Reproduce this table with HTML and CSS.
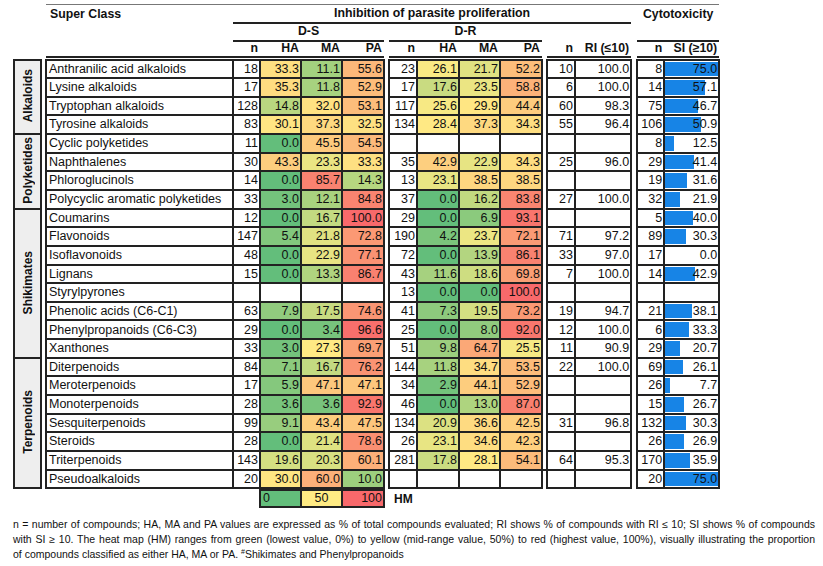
FILE: index.html
```html
<!DOCTYPE html>
<html lang="en">
<head>
<meta charset="utf-8">
<title>Super Class table</title>
<link rel="stylesheet" href="styles.css">
</head>
<body>
<div class="page">
  <table class="grid">
    <colgroup>
      <col class="c-label"><col class="c-gap"><col class="c-name">
      <col class="c-n"><col class="c-p"><col class="c-p"><col class="c-p2">
      <col class="c-gap"><col class="c-n2"><col class="c-p2"><col class="c-p"><col class="c-p2">
      <col class="c-gap"><col class="c-n2"><col class="c-ri">
      <col class="c-gap6"><col class="c-n"><col class="c-si">
    </colgroup>
    <thead>
      <tr class="h1">
        <td></td><td></td>
        <th class="top sc">Super Class</th>
        <th colspan="12" class="top under">Inhibition of parasite proliferation</th>
        <th class="top"></th>
        <th colspan="2" class="top">Cytotoxicity</th>
      </tr>
      <tr class="h2">
        <td></td><td></td><th></th>
        <th colspan="4" class="under">D-S</th>
        <th></th>
        <th colspan="4" class="under">D-R</th>
        <th></th>
        <th colspan="2"></th>
        <th></th>
        <th colspan="2" class="under"></th>
      </tr>
      <tr class="h3">
        <td></td><td></td>
        <th class="under"></th>
        <th class="under r">n</th><th class="under r">HA</th><th class="under r">MA</th><th class="under r">PA</th>
        <th></th>
        <th class="under r">n</th><th class="under r">HA</th><th class="under r">MA</th><th class="under r">PA</th>
        <th></th>
        <th class="under r">n</th><th class="under r">RI (≤10)</th>
        <th></th>
        <th class="under r">n</th><th class="under r">SI (≥10)</th>
      </tr>
      <tr class="sp3"><td colspan="18"></td></tr>
    </thead>
    <tbody id="rows"></tbody>
    <tfoot>
      <tr class="sp2"><td colspan="18"></td></tr>
      <tr class="legend">
        <td></td><td></td><td></td><td></td>
        <td class="lg lg-0">0</td>
        <td class="lg lg-50">50</td>
        <td class="lg lg-100">100</td>
        <td></td>
        <td colspan="10" class="hm">HM</td>
      </tr>
    </tfoot>
  </table>
  <p class="note">
    <span class="ln j">n = number of compounds; HA, MA and PA values are expressed as % of total compounds evaluated; RI shows % of compounds with RI ≤ 10; SI shows % of compounds</span>
    <span class="ln j">with SI ≥ 10. The heat map (HM) ranges from green (lowest value, 0%) to yellow (mid-range value, 50%) to red (highest value, 100%), visually illustrating the proportion</span>
    <span class="ln">of compounds classified as either HA, MA or PA. <sup>#</sup>Shikimates and Phenylpropanoids</span>
  </p>
</div>
<script src="script.js"></script>
</body>
</html>
```

FILE: styles.css
```css
* { box-sizing: border-box; }
html, body { margin: 0; padding: 0; background: #fff; }
body {
  font-family: "Liberation Sans", Arial, sans-serif;
  color: #111;
}
.page { padding: 4px 0 0 13px; }

.grid {
  border-collapse: collapse;
  table-layout: fixed;
  width: 705px;
  font-size: 12.5px;
  line-height: 1;
}
.c-label { width: 27px; }
.c-gap { width: 5px; }
.c-gap6 { width: 6px; }
.c-name { width: 187px; }
.c-n { width: 27px; }
.c-n2 { width: 28px; }
.c-p { width: 41px; }
.c-p2 { width: 42px; }
.c-ri { width: 56px; }
.c-si { width: 55px; }

.grid td, .grid th { padding: 0; white-space: nowrap; overflow: hidden; }

/* header */
.grid th { font-weight: bold; font-size: 12.3px; text-align: center; }
.grid th.r { text-align: right; padding-right: 2px; }
.grid th.sc { text-align: left; padding-left: 4px; }
.h1 { height: 18px; }
.h2 { height: 18px; }
.h3 { height: 16px; }
.top { border-top: 1px solid #777; }
.under { border-bottom: 2px solid #222; }
.sp3 { height: 3px; }
.sp3 td, .sp2 td { padding: 0; border: none; }
.sp2 { height: 2px; }

/* data */
.row { height: 18.65px; }
.row td { border: 2px solid #222; }
.row td.gap { border: none; }
.row td.gap.join { border-top: 2px solid #222; }
.row td.label {
  background: #eeeeee;
  text-align: center;
  vertical-align: middle;
  font-weight: bold;
  font-size: 12px;
}
.vt {
  display: inline-block;
  writing-mode: vertical-rl;
  transform: rotate(180deg);
}
.row td.name { text-align: left; padding-left: 2px; }
.row td.num { text-align: right; padding-right: 1px; }
.row td.si {
  background-image: linear-gradient(to right, #1784e6 var(--w), transparent var(--w));
  background-repeat: no-repeat;
  background-size: 100% calc(100% - 2px);
  background-position: left center;
}

/* legend */
.legend { height: 17px; }
.lg { border: 2px solid #222; font-size: 12.5px; }
.lg-0 { background: #63be7b; text-align: left; padding-left: 2px !important; }
.lg-50 { background: #ffeb84; text-align: center; }
.lg-100 { background: #f8696b; text-align: right; padding-right: 1px !important; }
.hm { font-weight: bold; font-size: 12px; text-align: left; padding-left: 5px !important; }

/* note */
.note {
  margin: 9px 0 0 0;
  width: 802px;
  font-size: 10.5px;
  line-height: 15px;
  color: #111;
}
.ln { display: block; white-space: nowrap; }
.j { text-align: justify; text-align-last: justify; }
.note sup { font-size: 7px; vertical-align: 4px; line-height: 0; }
```

FILE: script.js
```js
(function () {
  var D = [
    ["Anthranilic acid alkaloids", [18, 33.3, 11.1, 55.6], [23, 26.1, 21.7, 52.2], [10, 100.0], [8, 75.0]],
    ["Lysine alkaloids", [17, 35.3, 11.8, 52.9], [17, 17.6, 23.5, 58.8], [6, 100.0], [14, 57.1]],
    ["Tryptophan alkaloids", [128, 14.8, 32.0, 53.1], [117, 25.6, 29.9, 44.4], [60, 98.3], [75, 46.7]],
    ["Tyrosine alkaloids", [83, 30.1, 37.3, 32.5], [134, 28.4, 37.3, 34.3], [55, 96.4], [106, 50.9]],
    ["Cyclic polyketides", [11, 0.0, 45.5, 54.5], [null, null, null, null], [null, null], [8, 12.5]],
    ["Naphthalenes", [30, 43.3, 23.3, 33.3], [35, 42.9, 22.9, 34.3], [25, 96.0], [29, 41.4]],
    ["Phloroglucinols", [14, 0.0, 85.7, 14.3], [13, 23.1, 38.5, 38.5], [null, null], [19, 31.6]],
    ["Polycyclic aromatic polyketides", [33, 3.0, 12.1, 84.8], [37, 0.0, 16.2, 83.8], [27, 100.0], [32, 21.9]],
    ["Coumarins", [12, 0.0, 16.7, 100.0], [29, 0.0, 6.9, 93.1], [null, null], [5, 40.0]],
    ["Flavonoids", [147, 5.4, 21.8, 72.8], [190, 4.2, 23.7, 72.1], [71, 97.2], [89, 30.3]],
    ["Isoflavonoids", [48, 0.0, 22.9, 77.1], [72, 0.0, 13.9, 86.1], [33, 97.0], [17, 0.0]],
    ["Lignans", [15, 0.0, 13.3, 86.7], [43, 11.6, 18.6, 69.8], [7, 100.0], [14, 42.9]],
    ["Styrylpyrones", [null, null, null, null], [13, 0.0, 0.0, 100.0], [null, null], [null, null]],
    ["Phenolic acids (C6-C1)", [63, 7.9, 17.5, 74.6], [41, 7.3, 19.5, 73.2], [19, 94.7], [21, 38.1]],
    ["Phenylpropanoids (C6-C3)", [29, 0.0, 3.4, 96.6], [25, 0.0, 8.0, 92.0], [12, 100.0], [6, 33.3]],
    ["Xanthones", [33, 3.0, 27.3, 69.7], [51, 9.8, 64.7, 25.5], [11, 90.9], [29, 20.7]],
    ["Diterpenoids", [84, 7.1, 16.7, 76.2], [144, 11.8, 34.7, 53.5], [22, 100.0], [69, 26.1]],
    ["Meroterpenoids", [17, 5.9, 47.1, 47.1], [34, 2.9, 44.1, 52.9], [null, null], [26, 7.7]],
    ["Monoterpenoids", [28, 3.6, 3.6, 92.9], [46, 0.0, 13.0, 87.0], [null, null], [15, 26.7]],
    ["Sesquiterpenoids", [99, 9.1, 43.4, 47.5], [134, 20.9, 36.6, 42.5], [31, 96.8], [132, 30.3]],
    ["Steroids", [28, 0.0, 21.4, 78.6], [26, 23.1, 34.6, 42.3], [null, null], [26, 26.9]],
    ["Triterpenoids", [143, 19.6, 20.3, 60.1], [281, 17.8, 28.1, 54.1], [64, 95.3], [170, 35.9]],
    ["Pseudoalkaloids", [20, 30.0, 60.0, 10.0], [null, null, null, null], [null, null], [20, 75.0]]
  ];
  var groups = { 0: ["Alkaloids", 4], 4: ["Polyketides", 4], 8: ["Shikimates", 8], 16: ["Terpenoids", 7] };

  function heat(v) {
    var g = [99, 190, 123], y = [255, 235, 132], r = [248, 105, 107], m = 27, a, b, t;
    if (v <= m) { a = g; b = y; t = v / m; } else { a = y; b = r; t = (v - m) / (100 - m); }
    var c = a.map(function (x, i) { return Math.round(x + (b[i] - x) * t); });
    return "rgb(" + c.join(",") + ")";
  }
  function add(tr, cls, text) {
    var td = document.createElement("td");
    if (cls) td.className = cls;
    if (text !== undefined && text !== null) td.textContent = text;
    tr.appendChild(td);
    return td;
  }
  function pct(v) { return v === null ? null : v.toFixed(1); }

  var tb = document.getElementById("rows");
  D.forEach(function (r, i) {
    var last = i === D.length - 1;
    var tr = document.createElement("tr");
    tr.className = "row";
    if (groups[i]) {
      var lab = add(tr, "label");
      lab.rowSpan = groups[i][1];
      var s = document.createElement("span");
      s.className = "vt";
      s.textContent = groups[i][0];
      lab.appendChild(s);
    }
    add(tr, "gap");
    add(tr, "name", r[0]);
    [r[1], r[2]].forEach(function (blk, k) {
      add(tr, "num", blk[0]);
      for (var j = 1; j < 4; j++) {
        var td = add(tr, "num", pct(blk[j]));
        if (blk[j] !== null) td.style.backgroundColor = heat(blk[j]);
      }
      add(tr, last ? "gap join" : "gap");
    });
    add(tr, "num", r[3][0]);
    add(tr, "num", pct(r[3][1]));
    add(tr, "gap");
    add(tr, "num", r[4][0]);
    var si = add(tr, "num si", pct(r[4][1]));
    if (r[4][1] !== null) si.style.setProperty("--w", (r[4][1] / 75 * 100).toFixed(1) + "%");
    tb.appendChild(tr);
  });
})();
```
